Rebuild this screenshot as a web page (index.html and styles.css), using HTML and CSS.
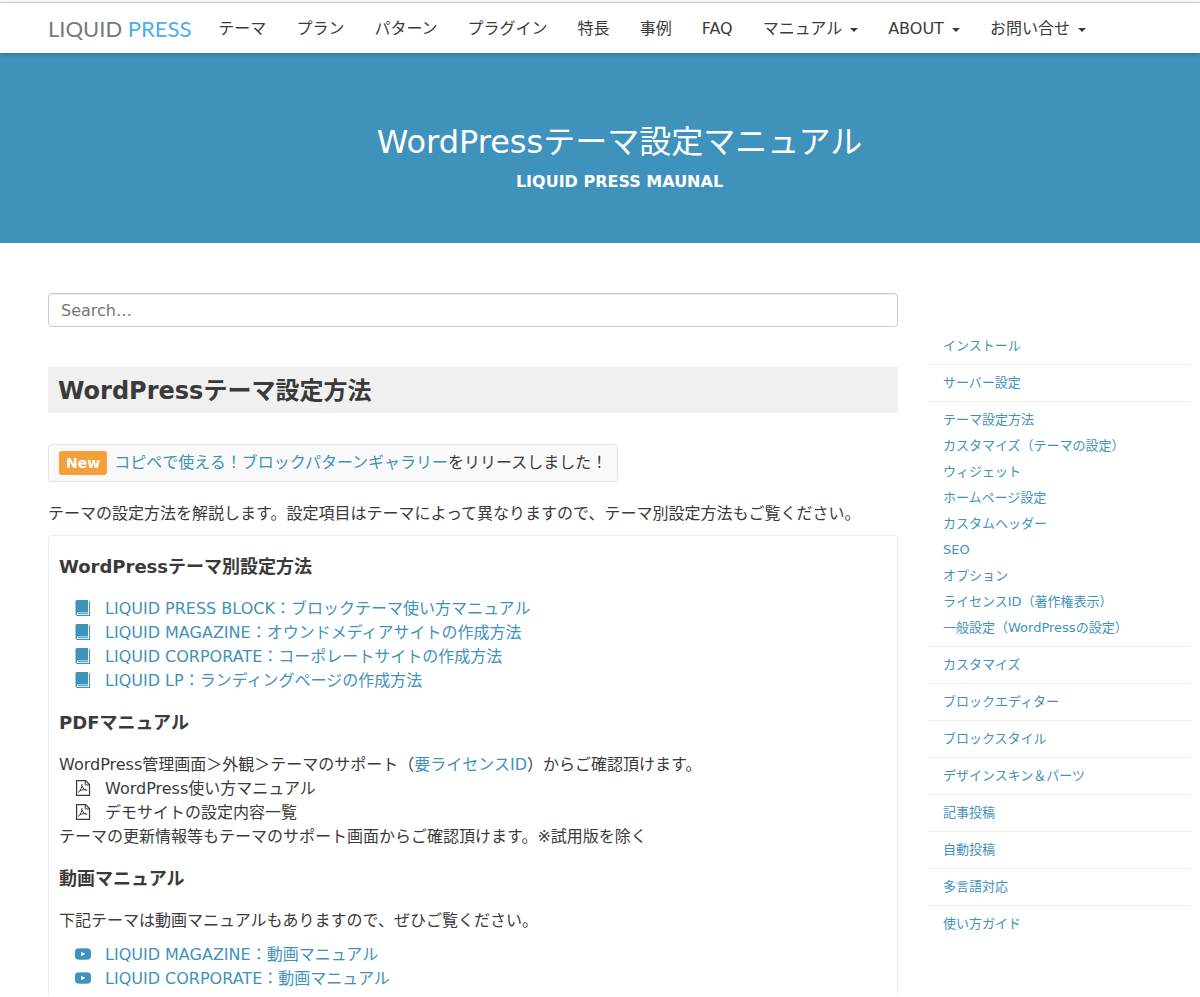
FILE: index.html
```html
<!DOCTYPE html>
<html lang="ja">
<head>
<meta charset="utf-8">
<meta name="viewport" content="width=device-width, initial-scale=1">
<title>WordPressテーマ設定マニュアル | LIQUID PRESS</title>
<link rel="stylesheet" href="styles.css">
</head>
<body>
<svg class="sprite" aria-hidden="true">
  <symbol id="book" viewBox="0 0 16 16">
    <path fill="currentColor" d="M2 0h11v12.500H3a1 1 0 0 0 0 2.500h11V1h1v15H3a2.500 2.500 0 0 1-2.500-2.500V1.500A1.500 1.500 0 0 1 2 0z"/>
    <path fill="currentColor" d="M3 13.200h10v1H3z"/>
  </symbol>
  <symbol id="pdf" viewBox="0 0 16 16">
    <path fill="none" stroke="currentColor" stroke-width="1.200" d="M1.600.6h8.900l4 4v10.800H1.600z"/>
    <path fill="none" stroke="currentColor" stroke-width="1" d="M10.200.6v4.300h4.300"/>
    <path fill="none" stroke="currentColor" stroke-width="1" d="M7 4c.2 3-1.500 6.500-3.700 8.500M7.200 6c.6 2.500 2.300 3.900 5 4.500M4.800 10.700c2-.9 4-1.200 6.600-.9"/>
  </symbol>
  <symbol id="video" viewBox="0 0 16 12">
    <path fill="currentColor" fill-rule="evenodd" d="M2.500.5Q8 0 13.500.5 15.700.7 15.900 3q.2 3 0 6-.2 2.300-2.400 2.500Q8 12 2.500 11.500.3 11.300.1 9-.1 6 .1 3 .3.700 2.500.5zM6.200 3.700v4.600L10.200 6z"/>
  </symbol>
</svg>

<header class="header">
  <div class="container nav-row">
    <a class="logo" href="#">LIQUID <span class="logo-accent">PRESS</span></a>
    <nav class="nav">
      <a href="#">テーマ</a>
      <a href="#">プラン</a>
      <a href="#">パターン</a>
      <a href="#">プラグイン</a>
      <a href="#">特長</a>
      <a href="#">事例</a>
      <a href="#">FAQ</a>
      <a href="#" class="has-menu">マニュアル</a>
      <a href="#" class="has-menu">ABOUT</a>
      <a href="#" class="has-menu">お問い合せ</a>
    </nav>
  </div>
</header>

<section class="hero">
  <div class="container">
    <h1 class="hero-title">WordPressテーマ設定マニュアル</h1>
    <p class="hero-sub">LIQUID PRESS MAUNAL</p>
  </div>
</section>

<div class="container columns">
  <main>
    <form role="search">
      <input class="search" type="search" placeholder="Search…" aria-label="Search">
    </form>
    <h2 class="title">WordPressテーマ設定方法</h2>
    <div class="notice"><span class="badge">New</span><a href="#">コピペで使える！ブロックパターンギャラリー</a>をリリースしました！</div>
    <p class="lead">テーマの設定方法を解説します。設定項目はテーマによって異なりますので、テーマ別設定方法もご覧ください。</p>

    <section class="panel">
      <h3>WordPressテーマ別設定方法</h3>
      <ul class="icon-list">
        <li><svg class="icon"><use href="#book"/></svg><a href="#">LIQUID PRESS BLOCK：ブロックテーマ使い方マニュアル</a></li>
        <li><svg class="icon"><use href="#book"/></svg><a href="#">LIQUID MAGAZINE：オウンドメディアサイトの作成方法</a></li>
        <li><svg class="icon"><use href="#book"/></svg><a href="#">LIQUID CORPORATE：コーポレートサイトの作成方法</a></li>
        <li><svg class="icon"><use href="#book"/></svg><a href="#">LIQUID LP：ランディングページの作成方法</a></li>
      </ul>

      <h3>PDFマニュアル</h3>
      <p>WordPress管理画面＞外観＞テーマのサポート（<a href="#">要ライセンスID</a>）からご確認頂けます。</p>
      <ul class="icon-list plain">
        <li><svg class="icon"><use href="#pdf"/></svg>WordPress使い方マニュアル</li>
        <li><svg class="icon"><use href="#pdf"/></svg>デモサイトの設定内容一覧</li>
      </ul>
      <p>テーマの更新情報等もテーマのサポート画面からご確認頂けます。<span class="mark">※</span>試用版を除く</p>

      <h3>動画マニュアル</h3>
      <p>下記テーマは動画マニュアルもありますので、ぜひご覧ください。</p>
      <ul class="icon-list videos">
        <li><svg class="icon video"><use href="#video"/></svg><a href="#">LIQUID MAGAZINE：動画マニュアル</a></li>
        <li><svg class="icon video"><use href="#video"/></svg><a href="#">LIQUID CORPORATE：動画マニュアル</a></li>
      </ul>
    </section>
  </main>

  <aside>
    <ul class="side">
      <li><a href="#">インストール</a></li>
      <li><a href="#">サーバー設定</a></li>
      <li>
        <a href="#">テーマ設定方法</a>
        <a href="#">カスタマイズ（テーマの設定）</a>
        <a href="#">ウィジェット</a>
        <a href="#">ホームページ設定</a>
        <a href="#">カスタムヘッダー</a>
        <a href="#">SEO</a>
        <a href="#">オプション</a>
        <a href="#">ライセンスID（著作権表示）</a>
        <a href="#">一般設定（WordPressの設定）</a>
      </li>
      <li><a href="#">カスタマイズ</a></li>
      <li><a href="#">ブロックエディター</a></li>
      <li><a href="#">ブロックスタイル</a></li>
      <li><a href="#">デザインスキン＆パーツ</a></li>
      <li><a href="#">記事投稿</a></li>
      <li><a href="#">自動投稿</a></li>
      <li><a href="#">多言語対応</a></li>
      <li><a href="#">使い方ガイド</a></li>
    </ul>
  </aside>
</div>
</body>
</html>
```

FILE: styles.css
```css
* {
  box-sizing: border-box;
}

body {
  margin: 0;
  background: #fff;
  color: #3a3a3a;
  font: 16px/24px "DejaVu Sans", "Noto Sans CJK JP", sans-serif;
}

a {
  color: #3f92bb;
  text-decoration: none;
}

h1, h2, h3, p, ul {
  margin: 0;
  padding: 0;
}

ul {
  list-style: none;
}

.sprite {
  display: none;
}

.container {
  padding: 0 9px 0 48px;
}

/* Header */
.header {
  position: relative;
  margin-top: 2px;
  border-top: 1px solid #ccc;
  background: #fff;
  box-shadow: 0 1px 4px rgba(0, 0, 0, 0.25);
}

.nav-row {
  display: flex;
  align-items: center;
  height: 50px;
}

.logo {
  margin-right: 12px;
  padding-top: 2px;
  color: #777;
  font: 22px/24px Lato, sans-serif;
  white-space: nowrap;
}

.logo-accent {
  color: #4aaeea;
}

.nav {
  display: flex;
  padding-top: 2px;
}

.nav a {
  padding: 0 15px;
  color: #3a3a3a;
  white-space: nowrap;
}

.has-menu::after {
  content: "";
  display: inline-block;
  margin-left: 8px;
  border: 4px solid transparent;
  border-top-color: #3a3a3a;
  border-bottom: 0;
  vertical-align: 2px;
}

/* Hero */
.hero {
  padding: 68px 0 48px;
  background: #3f92bb;
  color: #fff;
  text-align: center;
}

.hero-title {
  font-size: 32px;
  font-weight: 400;
  line-height: 42px;
}

.hero-sub {
  padding: 7px 0 1px;
  font-weight: 700;
}

/* Columns */
.columns {
  display: grid;
  grid-template-columns: 850fr 263fr;
  column-gap: 30px;
  padding-top: 50px;
}

.search {
  display: block;
  width: 100%;
  height: 34px;
  padding: 0 12px;
  border: 1px solid #ccc;
  border-radius: 4px;
  background: #fff;
  box-shadow: inset 0 1px 1px rgba(0, 0, 0, 0.08);
  color: #3a3a3a;
  font: inherit;
  appearance: none;
}

.search::placeholder {
  color: #777;
  opacity: 1;
}

.title {
  margin: 40px 0 31px;
  padding: 9px 10px 7px;
  background: #f0f0f0;
  font-size: 24px;
  line-height: 30px;
}

.notice {
  display: flex;
  align-items: center;
  width: fit-content;
  padding: 6px 10px;
  border: 1px solid #e3e3e3;
  border-radius: 4px;
  background: #f9f9f9;
}

.badge {
  margin-right: 7px;
  padding: 0 7px;
  border-radius: 3px;
  background: #f3a03a;
  color: #fff;
  font-size: 14px;
  font-weight: 700;
}

.lead {
  margin: 20px 0 9px;
}

.panel {
  padding: 19px 10px 5px;
  border: 1px solid #eee;
  border-bottom: 0;
  border-radius: 4px 4px 0 0;
}

.panel h3 {
  margin-bottom: 18px;
  font-size: 18px;
  line-height: 24px;
}

.panel * + h3 {
  margin-top: 18px;
}

.icon-list li {
  display: flex;
  align-items: center;
  padding-left: 16px;
}

.icon {
  flex: none;
  width: 16px;
  height: 16px;
  margin: 0 14px 2px 0;
  color: #3f92bb;
}

.plain .icon {
  color: #3a3a3a;
}

.icon.video {
  height: 12px;
}

.videos {
  margin-top: 10px;
}

/* Side menu */
.side {
  margin-top: 35px;
  font-size: 13px;
  line-height: 26px;
}

.side li {
  padding: 5px 15px;
  border-bottom: 1px solid #eee;
}

.side li:last-child {
  border-bottom: 0;
}

.side a {
  display: block;
}
```
